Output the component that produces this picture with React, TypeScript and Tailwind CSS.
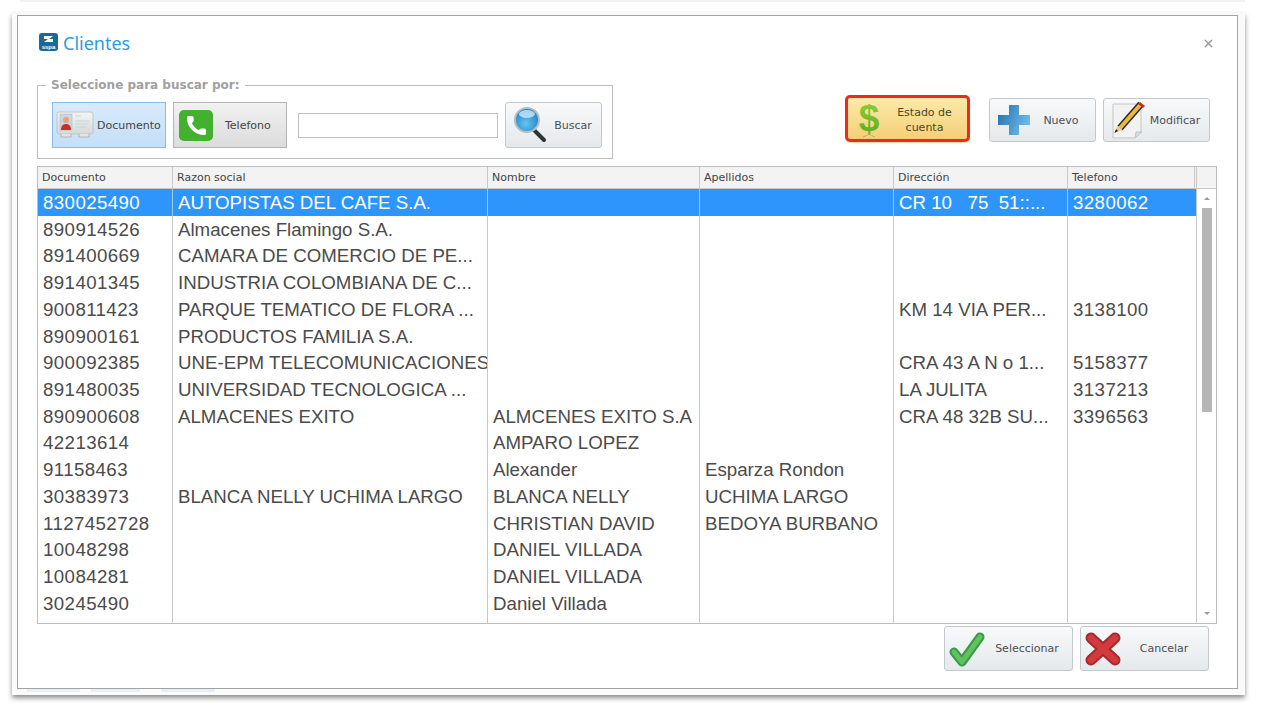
import { Phone, X } from "lucide-react";
import type { ReactNode } from "react";

const font = "font-['DejaVu_Sans','Liberation_Sans',sans-serif]";

// anchos de columna tomados de la grilla
const rows = [
  ["830025490", "AUTOPISTAS DEL CAFE S.A.", "", "", "CR 10   75  51::...", "3280062"],
  ["890914526", "Almacenes Flamingo S.A.", "", "", "", ""],
  ["891400669", "CAMARA DE COMERCIO DE PE...", "", "", "", ""],
  ["891401345", "INDUSTRIA COLOMBIANA DE C...", "", "", "", ""],
  ["900811423", "PARQUE TEMATICO DE FLORA ...", "", "", "KM 14 VIA PER...", "3138100"],
  ["890900161", "PRODUCTOS FAMILIA S.A.", "", "", "", ""],
  ["900092385", "UNE-EPM TELECOMUNICACIONES", "", "", "CRA 43 A N o 1...", "5158377"],
  ["891480035", "UNIVERSIDAD TECNOLOGICA ...", "", "", "LA JULITA", "3137213"],
  ["890900608", "ALMACENES EXITO", "ALMCENES EXITO S.A", "", "CRA 48 32B SU...", "3396563"],
  ["42213614", "", "AMPARO LOPEZ", "", "", ""],
  ["91158463", "", "Alexander", "Esparza Rondon", "", ""],
  ["30383973", "BLANCA NELLY UCHIMA LARGO", "BLANCA NELLY", "UCHIMA LARGO", "", ""],
  ["1127452728", "", "CHRISTIAN DAVID", "BEDOYA BURBANO", "", ""],
  ["10048298", "", "DANIEL VILLADA", "", "", ""],
  ["10084281", "", "DANIEL VILLADA", "", "", ""],
  ["30245490", "", "Daniel Villada", "", "", ""],
];

const headers = ["Documento", "Razon social", "Nombre", "Apellidos", "Dirección", "Telefono"];

const cols = "grid grid-cols-[135px_315px_212px_194px_174px_127px]";

function LogoIcon() {
  return (
    <svg width="19" height="18" viewBox="0 0 19 18">
      <rect width="19" height="18" rx="3" fill="#1b6a94" />
      <path d="M5 3h9l-4 3h4v3H5l4-3H5z" fill="#fff" />
      <text x="9.500" y="15.500" fontSize="6" fontWeight="700" fill="#fff" textAnchor="middle" fontFamily="Liberation Sans">
        sspa
      </text>
    </svg>
  );
}

function CardIcon() {
  return (
    <svg width="38" height="28" viewBox="0 0 38 28">
      <defs>
        <linearGradient id="card" x1="0" y1="0" x2="0" y2="1">
          <stop offset="0" stopColor="#f4f4f4" />
          <stop offset="1" stopColor="#d6d8d8" />
        </linearGradient>
      </defs>
      <rect x="1" y="1" width="36" height="22" rx="2" fill="url(#card)" stroke="#c4c4c4" />
      <rect x="4" y="3" width="12" height="16" fill="#c9d6df" stroke="#b5b5b5" strokeWidth="0.5" />
      <circle cx="10" cy="9" r="3" fill="#e3a77f" />
      <path d="M5 19c0-4 2-6 5-6s5 2 5 6z" fill="#c9302c" />
      <path d="M19 5h6M19 10h15M19 13h14M19 16h12" stroke="#c8d3dc" strokeWidth="1" />
      <path d="M5 23v3h10v-3M23 23v3h10v-3" fill="#e4e4e4" stroke="#b5b5b5" />
    </svg>
  );
}

function SearchIcon() {
  return (
    <svg width="34" height="36" viewBox="0 0 34 36">
      <defs>
        <radialGradient id="lens" cx="0.45" cy="0.65" r="0.7">
          <stop offset="0" stopColor="#63c6f1" />
          <stop offset="1" stopColor="#1478c4" />
        </radialGradient>
      </defs>
      <path d="M21 23l10 10" stroke="#2f3333" strokeWidth="4" strokeLinecap="round" />
      <circle cx="14" cy="13" r="12" fill="url(#lens)" stroke="#b5bcc0" strokeWidth="2" />
      <ellipse cx="14" cy="7" rx="8" ry="4" fill="#d5eefa" opacity="0.75" />
    </svg>
  );
}

function DollarIcon() {
  return (
    <svg width="30" height="44" viewBox="0 0 30 44" className="shrink-0">
      <defs>
        <linearGradient id="dollar" x1="0" y1="0" x2="0" y2="1">
          <stop offset="0" stopColor="#94d23a" />
          <stop offset="1" stopColor="#57a81f" />
        </linearGradient>
      </defs>
      <text x="15" y="34" fontSize="37" fontWeight="700" fill="url(#dollar)" textAnchor="middle" fontFamily="Liberation Sans">
        $
      </text>
      <path d="M9 40c3-1 4-2 6-3 2 1 3 2 6 3" stroke="#b9a97a" fill="none" />
    </svg>
  );
}

function PlusIcon() {
  return (
    <svg width="32" height="30" viewBox="0 0 32 30">
      <defs>
        <linearGradient id="plus" x1="0" y1="0" x2="1" y2="0.4">
          <stop offset="0" stopColor="#1e6fb0" />
          <stop offset="1" stopColor="#6db7e6" />
        </linearGradient>
      </defs>
      <path d="M11 0h10v10h11v10H21v10H11V20H0V10h11z" fill="url(#plus)" />
    </svg>
  );
}

function PencilIcon() {
  return (
    <svg width="36" height="38" viewBox="0 0 36 38">
      <path d="M2 3h28v28l-6 6H2z" fill="#f2f2f0" stroke="#c4c4c4" />
      <path d="M24 37l1-6h6z" fill="#dcdcdc" stroke="#c4c4c4" />
      <path d="M30 3L9 27" stroke="#2b2b2b" strokeWidth="7" />
      <path d="M30 3L9 27" stroke="#f0b93a" strokeWidth="4" />
      <path d="M29 1l5 4-2 2-5-4z" fill="#c62f22" />
      <path d="M6.500 24.500l5 4.500-8 3z" fill="#e8c9a0" />
      <path d="M3.500 32l1.500-4 2 2z" fill="#222" />
    </svg>
  );
}

function CheckIcon() {
  return (
    <svg width="38" height="36" viewBox="0 0 38 36">
      <path d="M6 21l8 10L32 6" fill="none" stroke="#3a9a44" strokeWidth="9" strokeLinecap="round" strokeLinejoin="round" />
      <path d="M6 21l8 10L32 6" fill="none" stroke="#5fc25f" strokeWidth="5" strokeLinecap="round" strokeLinejoin="round" />
    </svg>
  );
}

function CancelIcon() {
  return (
    <svg width="36" height="34" viewBox="0 0 36 34">
      <path d="M6 6l24 22M30 6L6 28" stroke="#a32a30" strokeWidth="11" strokeLinecap="round" />
      <path d="M6 6l24 22M30 6L6 28" stroke="#d23a3c" strokeWidth="7" strokeLinecap="round" />
    </svg>
  );
}

function ToolButton({ icon, label, className }: { icon: ReactNode; label: string; className: string }) {
  return (
    <button
      className={`flex shrink-0 items-center rounded-[3px] border border-[#c3c8cc] bg-gradient-to-b from-[#f7f9fa] to-[#e6e9ec] ${className}`}
    >
      <span className="flex w-[40px] shrink-0 items-center justify-center">{icon}</span>
      <span className="flex-1 text-center text-[11px] leading-[15px] text-[#4a4f55]">{label}</span>
    </button>
  );
}

export default function App() {
  return (
    <div className={`h-[708px] w-[1265px] overflow-hidden bg-white pl-[12px] ${font}`}>
      <div className="mb-[11px] ml-[8px] h-[2px] w-[1225px] bg-[#f1f1f1]" />
      <div className="h-[682px] w-[1233px] bg-[#fafafa] pl-[5px] pt-[2px] shadow-[0_3px_5px_rgba(0,0,0,0.45)]">
        <div className="flex h-[674px] w-[1221px] flex-col border border-[#a3a3a3] bg-white pl-[19px] pr-[20px]">
          {/* titulo */}
          <div className="flex h-[62px] shrink-0 items-start justify-between pt-[15px]">
            <div className="ml-[2px] flex items-start gap-[5px]">
              <span className="mt-[2px] flex">
                <LogoIcon />
              </span>
              <span className="mt-[1px] font-['Noto_Sans',sans-serif] text-[18px] leading-[22px] text-[#2d9be0]">Clientes</span>
            </div>
            <X size={13} strokeWidth={2.5} className="mr-[2px] mt-[6px] text-[#9a9a9a]" />
          </div>

          {/* barra de busqueda */}
          <div className="flex h-[88px] shrink-0 items-start justify-between">
            <fieldset className="h-[81px] w-[576px] border border-[#bdbdbd] pl-[14px]">
              <legend className="-ml-[6px] px-[5px] text-[12px] font-bold leading-[14px] text-[#a0a0a0]">
                Seleccione para buscar por:
              </legend>
              <div className="mt-[10px] flex items-center">
                <button className="flex h-[46px] w-[114px] items-center border border-[#88bcec] bg-gradient-to-b from-[#d9eafb] to-[#c3dff8] pl-[3px]">
                  <CardIcon />
                  <span className="ml-[3px] pt-[3px] text-[11px] text-[#444]">Documento</span>
                </button>
                <button className="ml-[7px] flex h-[46px] w-[114px] items-center border border-[#b4b4b4] bg-gradient-to-b from-[#f1f1f1] to-[#dcdcdc] pl-[5px]">
                  <span className="flex h-[31px] w-[34px] items-center justify-center rounded-[5px] bg-[#44b02f]">
                    <Phone size={23} fill="#fff" strokeWidth={0} className="text-white" />
                  </span>
                  <span className="ml-[12px] pt-[3px] text-[11px] text-[#444]">Telefono</span>
                </button>
                <input className="ml-[11px] h-[25px] w-[200px] border border-[#c0c0c0] bg-white" />
                <ToolButton icon={<SearchIcon />} label="Buscar" className="ml-[7px] h-[46px] w-[97px] pl-[4px] pr-[5px]" />
              </div>
            </fieldset>

            <div className="mr-[7px] mt-[17px] flex items-start">
              <div className="mr-[19px] flex h-[47px] w-[125px] items-center rounded-[5px] border-[3px] border-[#f0281e] bg-gradient-to-b from-[#fbeaa9] to-[#f5cf75] pl-[6px] pr-[2px] shadow-[0_1px_1px_#fbe2a0]">
                <DollarIcon />
                <span className="flex-1 pt-[3px] text-center text-[11px] leading-[15px] text-[#4a4436]">
                  Estado de<br />cuenta
                </span>
              </div>
              <ToolButton icon={<PlusIcon />} label="Nuevo" className="mr-[7px] mt-[3px] h-[44px] w-[107px] pl-[4px] pr-[7px]" />
              <ToolButton icon={<PencilIcon />} label="Modificar" className="mt-[3px] h-[44px] w-[107px] pl-[5px] pr-[8px]" />
            </div>
          </div>

          {/* grilla de clientes */}
          <div className="flex h-[458px] w-[1180px] shrink-0 border border-[#bdbdbd]">
            <div className="flex w-[1158px] flex-col">
              <div className={`${cols} h-[22px] shrink-0 border-b border-[#c8c8c8] bg-[#f3f3f3]`}>
                {headers.map((h) => (
                  <div key={h} className="border-r border-[#c8c8c8] pl-[4px] text-[11px] leading-[22px] text-[#444]">
                    {h}
                  </div>
                ))}
              </div>
              {rows.map((row, i) => (
                <div key={row[0]} className={`${cols} h-[26.73px] shrink-0 ${i === 0 ? "bg-[#2e95fb] text-white" : "text-[#4b4b4b]"}`}>
                  {row.map((cell, c) => (
                    <div
                      key={c}
                      className={`overflow-hidden whitespace-pre pl-[5px] font-['Liberation_Sans',sans-serif] text-[18.7px] leading-[27px] ${
                        c === 0 || c === 5 ? "tracking-[0.4px]" : ""
                      } ${c === 5 ? "" : i === 0 ? "border-r border-[#9ccaf5]" : "border-r border-[#c8c8c8]"}`}
                    >
                      {cell}
                    </div>
                  ))}
                </div>
              ))}
              {/* relleno para que las lineas lleguen abajo */}
              <div className={`${cols} flex-1`}>
                {headers.slice(0, 5).map((h) => (
                  <div key={h} className="border-r border-[#c8c8c8]" />
                ))}
              </div>
            </div>
            {/* scroll */}
            <div className="flex w-[20px] flex-col items-center border-l border-[#c8c8c8]">
              <div className="flex h-[22px] w-full shrink-0 border-b border-[#c8c8c8] bg-[#f3f3f3]" />
              <div className="mt-[8px] h-0 w-0 border-x-[3px] border-b-[3px] border-x-transparent border-b-[#9a9a9a]" />
              <div className="mt-[8px] h-[204px] w-[10px] bg-[#b6b6b6]" />
              <div className="mb-[8px] mt-auto h-0 w-0 border-x-[3px] border-t-[3px] border-x-transparent border-t-[#9a9a9a]" />
            </div>
          </div>

          {/* acciones */}
          <div className="mr-[8px] mt-[2px] flex justify-end gap-[7px]">
            <ToolButton icon={<CheckIcon />} label="Seleccionar" className="h-[45px] w-[129px] pl-[2px] pr-[5px]" />
            <ToolButton icon={<CancelIcon />} label="Cancelar" className="h-[45px] w-[129px] pl-[2px] pr-[3px]" />
          </div>
        </div>
        {/* restos de la ventana de atras */}
        <div className="ml-[10px] flex h-[3px] gap-[11px]">
          <div className="w-[53px] bg-[#e8eef3]" />
          <div className="w-[49px] bg-[#e8eef3]" />
          <div className="ml-[10px] w-[54px] bg-[#e8eef3]" />
        </div>
      </div>
    </div>
  );
}
